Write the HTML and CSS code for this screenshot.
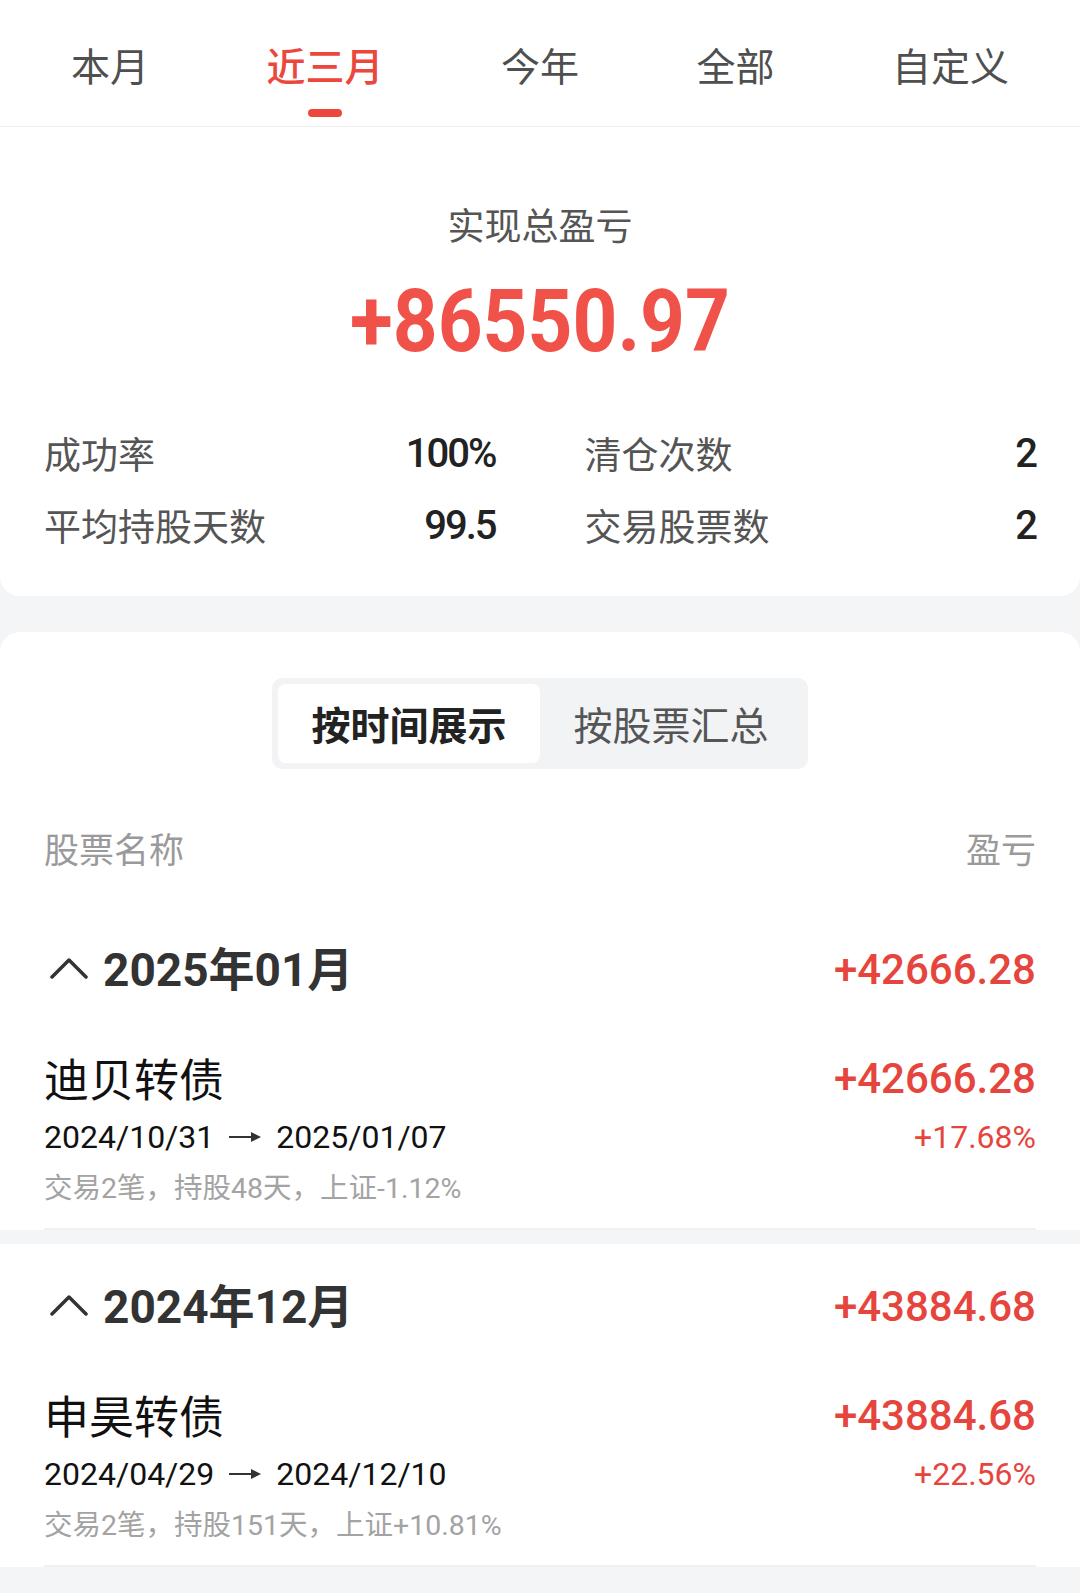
FILE: index.html
```html
<!DOCTYPE html>
<html lang="zh-CN">
  <head>
    <meta charset="UTF-8" />
    <title>已清仓盈亏</title>
    <link rel="stylesheet" href="styles.css">
  </head>
  <body>
    <nav class="tabs">
      <div class="tab">本月</div>
      <div class="tab active">近三月</div>
      <div class="tab">今年</div>
      <div class="tab">全部</div>
      <div class="tab">自定义</div>
    </nav>

    <section class="summary">
      <p class="summary-title">实现总盈亏</p>
      <p class="summary-total"><span>+86550.97</span></p>
      <div class="stats">
        <div class="stat"><span class="stat-label">成功率</span><span class="stat-value">100%</span></div>
        <div class="stat"><span class="stat-label">清仓次数</span><span class="stat-value">2</span></div>
        <div class="stat"><span class="stat-label">平均持股天数</span><span class="stat-value">99.5</span></div>
        <div class="stat"><span class="stat-label">交易股票数</span><span class="stat-value">2</span></div>
      </div>
    </section>

    <section class="records">
      <div class="segment">
        <div class="segment-item active">按时间展示</div>
        <div class="segment-item">按股票汇总</div>
      </div>

      <div class="list-head">
        <span>股票名称</span>
        <span>盈亏</span>
      </div>

      <div class="group">
        <div class="group-head">
          <div class="group-title">
            <svg class="chevron" width="38" height="22" viewBox="0 0 38 22">
              <polyline points="2,20 19,3 36,20" fill="none" stroke="#333" stroke-width="3.5" stroke-linecap="round" stroke-linejoin="round" />
            </svg>
            <span>2025年01月</span>
          </div>
          <span class="amount">+42666.28</span>
        </div>
        <div class="item">
          <div class="item-row">
            <span class="item-name">迪贝转债</span>
            <span class="amount">+42666.28</span>
          </div>
          <div class="item-row">
            <span class="item-dates">2024/10/31<svg class="arrow" width="32" height="14" viewBox="0 0 32 14"><line x1="0" y1="7" x2="24" y2="7" stroke="#333" stroke-width="2" /><polygon points="22,2 32,7 22,12" fill="#333" /></svg>2025/01/07</span>
            <span class="item-rate">+17.68%</span>
          </div>
          <div class="item-meta">交易2笔，持股48天，上证-1.12%</div>
        </div>
      </div>
    </section>

    <section class="group standalone">
      <div class="group-head">
        <div class="group-title">
          <svg class="chevron" width="38" height="22" viewBox="0 0 38 22">
            <polyline points="2,20 19,3 36,20" fill="none" stroke="#333" stroke-width="3.5" stroke-linecap="round" stroke-linejoin="round" />
          </svg>
          <span>2024年12月</span>
        </div>
        <span class="amount">+43884.68</span>
      </div>
      <div class="item">
        <div class="item-row">
          <span class="item-name">申昊转债</span>
          <span class="amount">+43884.68</span>
        </div>
        <div class="item-row">
          <span class="item-dates">2024/04/29<svg class="arrow" width="32" height="14" viewBox="0 0 32 14"><line x1="0" y1="7" x2="24" y2="7" stroke="#333" stroke-width="2" /><polygon points="22,2 32,7 22,12" fill="#333" /></svg>2024/12/10</span>
          <span class="item-rate">+22.56%</span>
        </div>
        <div class="item-meta">交易2笔，持股151天，上证+10.81%</div>
      </div>
    </section>
  </body>
</html>
```

FILE: styles.css
```css
body {
  margin: 0;
  background-color: #f4f5f7;
  font-family: "Noto Sans CJK SC", sans-serif;
  color: #222;
}

p {
  margin: 0;
}

/* top period tabs */
.tabs {
  display: flex;
  justify-content: space-between;
  padding: 0 71px;
  background: white;
  border-bottom: 1px solid #eeeeee;
}

.tab {
  display: flex;
  flex-direction: column;
  align-items: center;
  padding-top: 36px;
  font-size: 39px;
  line-height: 56px;
  color: #4f4f4f;
}

.tab::after {
  content: "";
  width: 34px;
  height: 8px;
  margin: 17px 0 9px;
  border-radius: 4px;
  background: transparent;
}

.tab.active {
  color: #ec473d;
  font-weight: 500;
}

.tab.active::after {
  background: #ec473d;
}

/* summary card */
.summary {
  background: white;
  border-radius: 0 0 20px 20px;
  padding: 72px 44px 35px;
}

.summary-title {
  text-align: center;
  font-size: 37px;
  line-height: 50px;
  color: #555;
}

.summary-total {
  margin-top: 22px;
  text-align: center;
  font-family: Roboto, sans-serif;
  font-weight: 700;
  font-size: 87px;
  line-height: 100px;
  color: #f05249;
}

.summary-total span {
  display: inline-block;
  transform: scaleX(0.9);
}

.stats {
  margin-top: 46px;
  display: grid;
  grid-template-columns: 1fr 1fr;
  column-gap: 89px;
}

.stat {
  display: flex;
  justify-content: space-between;
  align-items: center;
  height: 72px;
}

.stat-label {
  font-size: 37px;
  color: #555;
}

.stat-value {
  font-family: Roboto, sans-serif;
  font-weight: 500;
  font-size: 40px;
  letter-spacing: -2px;
  color: #222;
}

/* records card */
.records {
  margin-top: 36px;
  background: white;
  border-radius: 20px 20px 0 0;
  padding-top: 46px;
}

.segment {
  display: flex;
  width: 524px;
  margin: 0 auto;
  padding: 6px;
  border-radius: 10px;
  background: #f2f3f5;
}

.segment-item {
  flex: 1;
  height: 79px;
  line-height: 79px;
  text-align: center;
  font-size: 39px;
  color: #555;
  border-radius: 8px;
}

.segment-item.active {
  background: white;
  color: #222;
  font-weight: 700;
}

.list-head {
  display: flex;
  justify-content: space-between;
  padding: 58px 44px 38px;
  font-size: 35px;
  line-height: 42px;
  color: #9a9a9a;
}

.group {
  background: white;
  padding: 0 44px;
}

.group.standalone {
  margin-top: 14px;
}

.group-head {
  display: flex;
  justify-content: space-between;
  align-items: center;
  height: 124px;
}

.group-title {
  display: flex;
  align-items: center;
  margin-bottom: 6px;
  font-family: Roboto, "Noto Sans CJK SC", sans-serif;
  font-weight: 700;
  font-size: 46px;
  color: #333;
}

.chevron {
  margin: 4px 15px 0 6px;
}

.amount {
  font-family: Roboto, sans-serif;
  font-weight: 500;
  font-size: 42px;
  color: #e6453d;
}

.item {
  padding: 18px 0 17px;
  border-bottom: 2px solid #eef0f2;
}

.item-row {
  display: flex;
  justify-content: space-between;
  align-items: center;
}

.item-name {
  font-size: 45px;
  line-height: 58px;
  color: #111;
}

.item-dates {
  display: flex;
  align-items: center;
  font-family: Roboto, sans-serif;
  font-size: 32px;
  line-height: 60px;
  color: #111;
}

.arrow {
  margin: 0 15px;
}

.item-rate {
  font-family: Roboto, sans-serif;
  font-size: 32px;
  color: #e6453d;
}

.item-meta {
  font-family: Roboto, "Noto Sans CJK SC", sans-serif;
  font-size: 28.5px;
  line-height: 44px;
  color: #a3a3a3;
}
```
